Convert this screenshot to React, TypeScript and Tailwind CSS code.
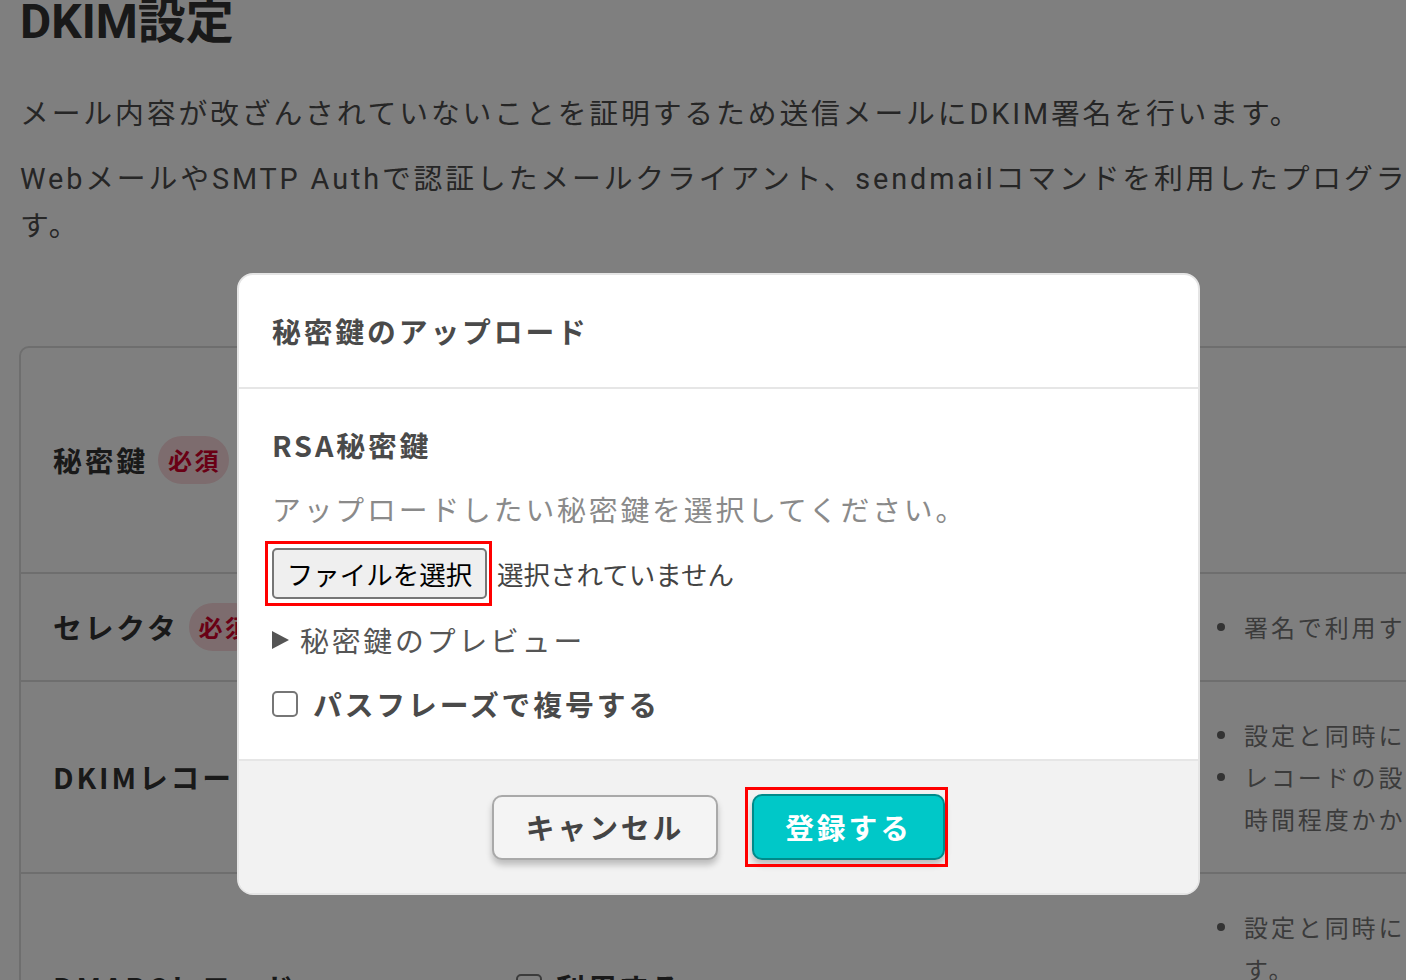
import { ReactNode } from 'react'

type Row = {
  label: string
  required?: boolean
  height?: string
  input?: ReactNode
  notes?: ReactNode[]
}

function Badge() {
  return (
    <span className="ml-[10px] inline-flex h-[48px] items-center rounded-full bg-[#fad8dc] pl-[10px] pr-[8px] text-[24px] font-bold tracking-[0.1em] text-[#d4002a]">
      必須
    </span>
  )
}

function Notes({ items }: { items: ReactNode[] }) {
  return (
    <ul className="whitespace-nowrap text-[24px] leading-[42px] tracking-[0.12em] text-[#777]">
      {items.map((item, i) => (
        <li key={i} className="flex">
          <span className="mt-[17px] mr-[19px] h-[8px] w-[8px] shrink-0 rounded-full bg-[#666]" />
          <span>{item}</span>
        </li>
      ))}
    </ul>
  )
}

const rows: Row[] = [
  { label: '秘密鍵', required: true, height: 'h-[224px]' },
  {
    label: 'セレクタ',
    required: true,
    notes: ['署名で利用するセレクタを指定してください。'],
  },
  {
    label: 'DKIMレコード',
    notes: [
      '設定と同時にDNSへDKIMレコードが登録されます。',
      <>
        レコードの設定が反映されるまで最大24
        <br />
        時間程度かかる場合があります。
      </>,
    ],
  },
  {
    label: 'DMARCレコード',
    height: 'min-h-[228px]',
    input: (
      <label className="flex items-center gap-[14px] text-[28.8px] font-bold tracking-[0.1em] text-[#333]">
        <span className="h-[26px] w-[26px] rounded-[5px] border-2 border-[#767676] bg-white" />
        利用する
      </label>
    ),
    notes: [
      <>
        設定と同時にDMARCレコードが登録されま
        <br />
        す。
      </>,
      'ポリシーはnoneで登録されます。',
    ],
  },
]

export default function App() {
  return (
    <div className="relative h-[980px] w-[1406px] overflow-hidden bg-white font-['Noto_Sans_CJK_JP',sans-serif]">
      {/* page behind the dialog */}
      <div className="w-[1800px] pl-[20px] text-[#4c4c4c]">
        <div className="font-['Roboto','Noto_Sans_CJK_JP',sans-serif]">
          <h1 className="mt-[-8px] text-[48px] font-bold leading-[60px] text-[#333]">DKIM設定</h1>
          <p className="mt-[39px] whitespace-nowrap text-[28.8px] leading-[47px] tracking-[0.1em]">
            メール内容が改ざんされていないことを証明するため送信メールにDKIM署名を行います。
          </p>
          <p className="mt-[18px] whitespace-nowrap text-[28.8px] leading-[47px] tracking-[0.1em]">
            WebメールやSMTP Authで認証したメールクライアント、sendmailコマンドを利用したプログラムからの送信メールにも署名しま
            <br />
            す。
          </p>
        </div>

        <div className="ml-[-1px] mt-[96px] w-[1700px] rounded-[10px] border-2 border-[#dcdcdc]">
          {rows.map((row, i) => (
            <div
              key={row.label}
              className={`grid grid-cols-[460px_709px_1fr] ${row.height ?? ''} ${
                i > 0 ? 'border-t-2 border-[#dcdcdc]' : ''
              }`}
            >
              <div className="flex items-center pl-[32px] text-[28.8px] font-bold tracking-[0.1em] text-[#333]">
                {row.label}
                {row.required && <Badge />}
              </div>
              <div className="flex items-center pl-[35px]">{row.input}</div>
              <div className="py-[32px] pl-[27px]">{row.notes && <Notes items={row.notes} />}</div>
            </div>
          ))}
        </div>
      </div>

      {/* dialog */}
      <div className="absolute inset-0 bg-black/50">
        <div className="ml-[237px] mt-[273px] w-[963px] overflow-hidden rounded-[16px] border-2 border-[#e5e5e5] bg-white">
          <div className="flex h-[114px] items-center border-b-2 border-[#e6e6e6] pl-[33px]">
            <h2 className="text-[28.8px] font-bold tracking-[0.1em] text-[#4a4a4a]">秘密鍵のアップロード</h2>
          </div>

          <div className="px-[33px] pb-[32px] pt-[32px]">
            <h3 className="text-[28.8px] font-bold leading-[48px] tracking-[0.1em] text-[#4a4a4a]">RSA秘密鍵</h3>
            <p className="mt-[16px] text-[28.8px] leading-[47px] tracking-[0.1em] text-[#8a8a8a]">
              アップロードしたい秘密鍵を選択してください。
            </p>

            <div className="mt-[16px] flex h-[51px] items-center">
              <span className="relative">
                <button className="h-[51px] w-[215px] rounded-[5px] border-2 border-[#767676] bg-[#efefef] text-[26.5px] text-black">
                  ファイルを選択
                </button>
                <span className="pointer-events-none absolute bottom-[-7px] left-[-7px] right-[-5px] top-[-7px] border-[3px] border-[#ff0000]" />
              </span>
              <span className="ml-[10px] text-[26.5px] text-[#444]">選択されていません</span>
            </div>

            <div className="mt-[17px] flex items-center text-[28.8px] leading-[47px] tracking-[0.1em] text-[#555]">
              <svg width="17" height="18" viewBox="0 0 17 18" className="mr-[11px]">
                <polygon points="0,0 17,9 0,18" fill="#555" />
              </svg>
              秘密鍵のプレビュー
            </div>

            <label className="mt-[17px] flex items-center text-[28.8px] font-bold leading-[47px] tracking-[0.1em] text-[#4a4a4a]">
              <span className="mr-[15px] h-[26px] w-[26px] rounded-[5px] border-2 border-[#767676] bg-white" />
              パスフレーズで複号する
            </label>
          </div>

          <div className="flex h-[134px] items-center justify-center gap-[34px] border-t-2 border-[#e6e6e6] bg-[#f2f2f2]">
            <button className="h-[65px] w-[226px] rounded-[10px] border-2 border-[#a9a9a9] bg-[#f4f4f4] text-[28.8px] font-bold tracking-[0.1em] text-[#444] shadow-[0_5px_6px_rgba(0,0,0,0.22)]">
              キャンセル
            </button>
            <span className="relative">
              <button className="h-[66px] w-[193px] rounded-[10px] border-2 border-[#008a8a] bg-[#00c8c8] text-[28.8px] font-bold tracking-[0.1em] text-white shadow-[0_5px_6px_rgba(0,0,0,0.22)]">
                登録する
              </button>
              <span className="pointer-events-none absolute bottom-[-7px] left-[-7px] right-[-3px] top-[-7px] border-[3px] border-[#ff0000]" />
            </span>
          </div>
        </div>
      </div>
    </div>
  )
}
